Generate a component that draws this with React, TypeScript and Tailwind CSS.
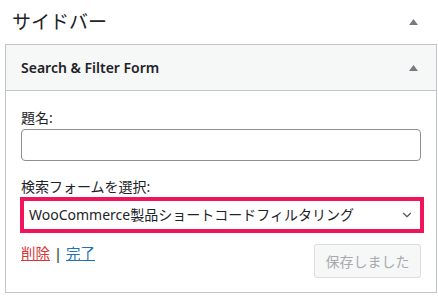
import { ChevronDown } from "lucide-react";

function Triangle() {
  return (
    <svg width="9" height="6" viewBox="0 0 9 6" className="block">
      <path d="M4.5 0 L9 6 L0 6 Z" fill="#787c82" />
    </svg>
  );
}

export default function App() {
  return (
    <div
      className="w-[438px] h-[301px] bg-white text-[#1d2327] overflow-hidden"
      style={{ fontFamily: '"Noto Sans", "Noto Sans CJK JP", sans-serif' }}
    >
      <div className="h-[44px] flex items-center justify-between pl-3 pr-[20px]">
        <h2 className="text-[19px] leading-none text-[#1d2327]">サイドバー</h2>
        <Triangle />
      </div>

      <div className="ml-[5px] mr-[1px] border border-[#c3c4c7] h-[249px]">
        <div className="h-[46px] bg-[#f6f7f7] border-b border-[#c3c4c7] flex items-center justify-between pl-[15px] pr-[18px]">
          <h3 className="text-[14px] font-semibold leading-none">Search &amp; Filter Form</h3>
          <Triangle />
        </div>

        <div className="px-[15px] pt-[17px] pb-[14px]">
          <label className="block text-[14px] leading-[20px] mb-[1px]">題名:</label>
          <div className="h-[32px] border border-[#8c8f94] rounded-[4px] bg-white" />

          <label className="block text-[14px] leading-[20px] mt-[16px]">検索フォームを選択:</label>
          <div className="-ml-[1px] -mr-[3px] h-[36px] border-4 border-[#f0145a] bg-white flex items-center justify-between pl-[5px] pr-[6px]">
            <span className="text-[14px] leading-none">WooCommerce製品ショートコードフィルタリング</span>
            <ChevronDown size={14} strokeWidth={2} color="#50575e" />
          </div>

          <div className="mt-[11px] flex items-start justify-between">
            <div className="text-[14.5px] leading-[18px] flex items-center gap-[4px]">
              <a className="text-[#d63638] underline">削除</a>
              <span className="text-[#1d2327]">|</span>
              <a className="text-[#2271b1] underline">完了</a>
            </div>
            <button className="w-[107px] h-[34px] rounded-[3px] border border-[#dcdcde] bg-[#f6f7f7] text-[#a7aaad] text-[14px]">
              保存しました
            </button>
          </div>
        </div>
      </div>
    </div>
  );
}
